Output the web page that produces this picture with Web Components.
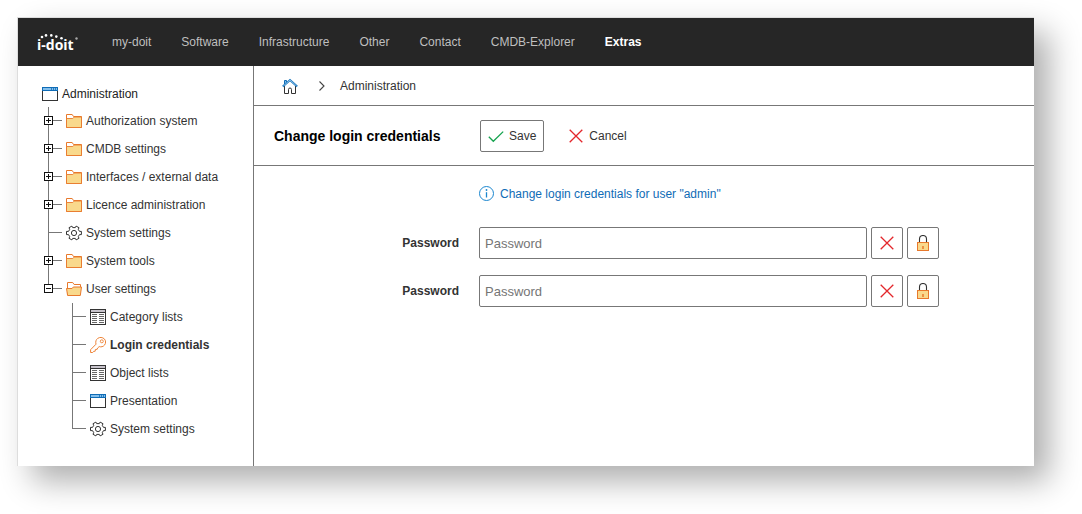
<!DOCTYPE html>
<html lang="en">
<head>
<meta charset="utf-8">
<title>i-doit – Change login credentials</title>
<style>
  html { height: 100%; }
  body {
    margin: 0; min-height: 100vh; display: flex; box-sizing: border-box;
    padding: 17px 48px 48px 17px; background: #fff; color: #333;
    font: 12px/16px "Liberation Sans", Arial, sans-serif;
  }
</style>
</head>
<body>
<app-window>
  <top-nav slot="header">
    <a href="#my-doit">my-doit</a>
    <a href="#software">Software</a>
    <a href="#infrastructure">Infrastructure</a>
    <a href="#other">Other</a>
    <a href="#contact">Contact</a>
    <a href="#cmdb">CMDB-Explorer</a>
    <a href="#extras" aria-current="page">Extras</a>
  </top-nav>

  <nav-tree slot="sidebar" label="Administration">
    <tree-item icon="folder" toggle="closed" label="Authorization system"></tree-item>
    <tree-item icon="folder" toggle="closed" label="CMDB settings"></tree-item>
    <tree-item icon="folder" toggle="closed" label="Interfaces / external data"></tree-item>
    <tree-item icon="folder" toggle="closed" label="Licence administration"></tree-item>
    <tree-item icon="gear" label="System settings"></tree-item>
    <tree-item icon="folder" toggle="closed" label="System tools"></tree-item>
    <tree-item icon="folder-open" toggle="open" last label="User settings">
      <tree-item icon="list" label="Category lists"></tree-item>
      <tree-item icon="key" current label="Login credentials"></tree-item>
      <tree-item icon="list" label="Object lists"></tree-item>
      <tree-item icon="window" label="Presentation"></tree-item>
      <tree-item icon="gear" last label="System settings"></tree-item>
    </tree-item>
  </nav-tree>

  <crumb-bar>Administration</crumb-bar>
  <title-bar>
    <span slot="title">Change login credentials</span>
    <tool-button icon="check" label="Save" framed></tool-button>
    <tool-button icon="cross" label="Cancel"></tool-button>
  </title-bar>
  <credentials-form>
    <info-note>Change login credentials for user "admin"</info-note>
    <password-row label="Password"></password-row>
    <password-row label="Password"></password-row>
  </credentials-form>
</app-window>

<script>
const ICONS = {
  window: `<rect x=".5" y="1.5" width="15" height="13" fill="#fff" stroke="#333"/><rect x=".5" y="1.5" width="15" height="3" fill="#83bfec" stroke="#0f6cb6"/><path d="M9.5 2v2M11.5 2v2M13.5 2v2" stroke="#0f6cb6" stroke-width=".8"/>`,
  folder: `<path d="M.5 14.5V1.5h5.700l1.300 2h8v11z" fill="#fff" stroke="#e8792c"/><path d="M.5 14.500V5.500h6.300l1.500-1.500h7.200v10.500z" fill="#f9d98c" stroke="#e8792c" stroke-width=".9"/>`,
  'folder-open': `<path d="M1.5 14V1.5h5.200l1.400 2h6.400V8" fill="#fff" stroke="#e8792c"/><path d="M.5 7.500h5.600l1.200-1.500h8.200l-1.200 8.500H1.600z" fill="#f9d98c" stroke="#e8792c"/>`,
  gear: `<path d="M5.900 1.100l.8 1.500h2.600l.8-1.500 2.900 1.600-.7 1.700 1.200 2h1.900v3.200h-1.900l-1.200 2 .7 1.700-2.900 1.600-.8-1.500H6.700l-.8 1.500L3 13.300l.7-1.700-1.200-2H.5V6.400h2l1.200-2L3 2.700z" fill="#fff" stroke="#333" stroke-linejoin="round"/><circle cx="8" cy="8" r="2.600" fill="none" stroke="#333"/>`,
  list: `<rect x=".5" y=".5" width="15" height="15" fill="#fff" stroke="#333"/><rect x="1" y="1" width="14" height="2" fill="#c8c4cc"/><path d="M1 3.500h14" stroke="#333"/><path d="M2 5.500h5M2 7.500h5M2 9.500h5M2 11.500h5M2 13.500h5M9 5.500h5M9 7.500h5M9 9.500h5M9 11.500h5M9 13.500h5" stroke="#666"/>`,
  key: `<path d="M6 7.200C5.300 4.500 6.100 2.600 7.700 1.400 9.700 0 12.500.1 14.300 1.900c1.700 1.700 1.700 4.400.2 6.200-1.300 1.600-3.400 2.100-5.300 1.500L7.600 11l-.4 1.300-1.800.2-.2 1.700-1.600.2-.9 1.100H.6v-2.800z" fill="#fff" stroke="#ee8336" stroke-linejoin="round"/><circle cx="11.800" cy="4.300" r="1.500" fill="none" stroke="#ee8336" stroke-width=".9"/>`,
  home: `<path d="M2.500 8v7.500h4v-4a1.500 1.500 0 0 1 3 0v4h4V8" fill="#fff" stroke="#333"/><path d="M2.500 6V2.500h2V4.500" fill="#83bfec" stroke="#0f6cb6"/><path d="M.8 8.500L8 2l7.200 6.500" fill="none" stroke="#1a76bd" stroke-width="2"/><path d="M1.400 8L8 2.100 14.600 8" fill="none" stroke="#9accf0" stroke-width=".8"/>`,
  chevron: `<path d="M5.500 3.500L10 8l-4.500 4.500" fill="none" stroke="#444" stroke-width="1.100"/>`,
  check: `<path d="M.8 8.800l4.500 4.500L15.200 3.600" fill="none" stroke="#16a34f" stroke-width="1.300"/>`,
  cross: `<path d="M1.700 1.700l12.600 12.600M14.300 1.700L1.700 14.300" fill="none" stroke="#e3262b" stroke-width="1.300"/>`,
  info: `<circle cx="7.500" cy="7.500" r="7" fill="#fff" stroke="#1b86cf"/><path d="M7.500 6.200v5.300" stroke="#1b86cf" stroke-width="1.300"/><circle cx="7.500" cy="4" r=".9" fill="#1b86cf"/>`,
  lock: `<path d="M4.500 8V4a3.500 3.500 0 0 1 7 0v4" fill="none" stroke="#333" stroke-width="1.100"/><rect x="2.500" y="7.500" width="11" height="8" fill="#f9d98c" stroke="#e8792c"/><rect x="7" y="11" width="2" height="3" fill="#e8792c" opacity=".75"/>`
};
const svg = name => `<svg class="icon" width="16" height="16" viewBox="0 0 16 16" aria-hidden="true">${ICONS[name]}</svg>`;

class Base extends HTMLElement {
  connectedCallback() {
    if (this.shadowRoot) return;
    this.attachShadow({ mode: 'open' }).innerHTML =
      `<style>:host,*{box-sizing:border-box}.icon{display:block;flex:none}${this.css()}</style>${this.html()}`;
  }
}

customElements.define('app-window', class extends Base {
  css() { return `
    :host{flex:1;display:flex;flex-direction:column;min-width:0;background:#fff;
      border:solid #ddd;border-width:1px 0 0 1px;box-shadow:15px 15px 30px rgba(0,0,0,.32)}
    .body{flex:1;display:flex}
    aside{flex:none;width:236px;border-right:1px solid #777;padding:14px 0 14px 24px}
    main{flex:1;min-width:0}`; }
  html() { return `<slot name="header"></slot><div class="body"><aside><slot name="sidebar"></slot></aside><main><slot></slot></main></div>`; }
});

customElements.define('top-nav', class extends Base {
  css() { return `
    :host{display:flex;align-items:center;height:48px;padding-left:19px;background:#262626}
    .logo{width:75px;flex:none}
    .logo svg{display:block}
    nav{display:flex;gap:30px}
    ::slotted(a){color:#bfbfbf;text-decoration:none}
    ::slotted(a[aria-current]){color:#fff;font-weight:bold}`; }
  html() { return `<div class="logo"><svg width="44" height="24" viewBox="0 0 44 24" fill="#fff" role="img" aria-label="i-doit">
    <text x="0" y="20" font-family="Open Sans, sans-serif" font-weight="700" font-size="14">i-doit</text>
    <circle cx="5" cy="7" r="1.300"/><circle cx="9" cy="5.400" r="1.300"/><circle cx="14.300" cy="5.400" r="1.300"/><circle cx="19.300" cy="6.600" r="1.300"/><circle cx="24.500" cy="8.300" r="1.300"/><circle cx="39.500" cy="8.500" r="1.200" opacity=".6"/></svg></div><nav><slot></slot></nav>`; }
});

customElements.define('nav-tree', class extends Base {
  css() { return `
    :host{display:block}
    .root{display:flex;align-items:center;gap:4px;height:27px;color:#222;text-decoration:none}`; }
  html() { return `<a class="root" href="#administration">${svg('window')}<span>${this.getAttribute('label')}</span></a><div><slot></slot></div>`; }
});

customElements.define('tree-item', class extends Base {
  css() { return `
    :host{display:block;background:linear-gradient(#777,#777) 6px 0/1px 100% no-repeat}
    :host([last]){background-size:1px 14px}
    .row{display:flex;align-items:center;height:28px}
    .branch{flex:none;width:24px;height:28px;padding:9px 0 0 2px;
      background:linear-gradient(#777,#777) 6px 13px/14px 1px no-repeat}
    button{display:block;width:9px;height:9px;margin:0;padding:0;border:1px solid #111;background-color:#fff;
      background-image:linear-gradient(#111,#111),linear-gradient(#111,#111);
      background-size:5px 1px,1px 5px;background-position:center;background-repeat:no-repeat}
    button[aria-expanded=true]{background-size:5px 1px,0 0}
    a{display:flex;align-items:center;gap:4px;color:#333;text-decoration:none;white-space:nowrap}
    :host([current]) a{font-weight:bold}
    .kids{padding-left:24px}`; }
  html() {
    const t = this.getAttribute('toggle'), l = this.getAttribute('label');
    return `<div class="row"><span class="branch">${t ? `<button type="button" aria-label="Toggle" aria-expanded="${t === 'open'}"></button>` : ''}</span>
      <a href="#item">${svg(this.getAttribute('icon'))}<span>${l}</span></a></div><div class="kids"><slot></slot></div>`;
  }
});

customElements.define('crumb-bar', class extends Base {
  css() { return `
    :host{display:block;border-bottom:1px solid #777}
    nav{display:flex;align-items:center;height:39px;padding-left:28px}
    a{color:#333;text-decoration:none}
    .sep{padding:0 10px 0 16px}`; }
  html() { return `<nav aria-label="Breadcrumb"><a href="#home" aria-label="Home">${svg('home')}</a><span class="sep">${svg('chevron')}</span><a href="#administration"><slot></slot></a></nav>`; }
});

customElements.define('title-bar', class extends Base {
  css() { return `
    :host{display:flex;align-items:center;height:60px;padding-left:20px;border-bottom:1px solid #777}
    h1{margin:0;width:206px;flex:none;font-size:14px;line-height:20px;color:#000}
    .tools{display:flex;gap:16px}`; }
  html() { return `<h1><slot name="title"></slot></h1><div class="tools"><slot></slot></div>`; }
});

customElements.define('tool-button', class extends Base {
  css() { return `
    :host{display:block}
    button{display:flex;align-items:center;gap:5px;height:32px;padding:0 7px;font:inherit;color:#333;
      background:#fff;border:1px solid transparent;border-radius:2px}
    :host([framed]) button{border-color:#777}`; }
  html() { return `<button type="button">${svg(this.getAttribute('icon'))}<span>${this.getAttribute('label')}</span></button>`; }
});

customElements.define('credentials-form', class extends Base {
  css() { return `:host{display:block;padding:20px 16px 20px 0}form{display:flex;flex-direction:column;gap:16px}`; }
  html() { return `<form><slot></slot></form>`; }
});

customElements.define('info-note', class extends Base {
  css() { return `:host{display:flex;align-items:flex-start;gap:5px;margin:0 0 8px 225px;height:17px;line-height:17px;color:#0f6cb6}`; }
  html() { return `${svg('info')}<span><slot></slot></span>`; }
});

customElements.define('password-row', class extends Base {
  css() { return `
    :host{display:grid;grid-template-columns:205px minmax(0,460px);column-gap:20px;align-items:center}
    label{text-align:right;font-weight:bold}
    .field{display:flex;gap:4px}
    input{flex:1;min-width:0;height:32px;padding:0 5px;border:1px solid #777;border-radius:2px;
      font:13px/16px "Liberation Sans",Arial,sans-serif;color:#333;background:#fff}
    input::placeholder{color:#757575}
    button{flex:none;width:32px;height:32px;padding:0;display:flex;align-items:center;justify-content:center;
      border:1px solid #777;border-radius:2px;background:#fff}`; }
  html() { const l = this.getAttribute('label'); return `<label for="pw">${l}</label><div class="field">
    <input id="pw" type="password" placeholder="${l}"><button type="button" aria-label="Clear">${svg('cross')}</button><button type="button" aria-label="Show password">${svg('lock')}</button></div>`; }
});
</script>
</body>
</html>
